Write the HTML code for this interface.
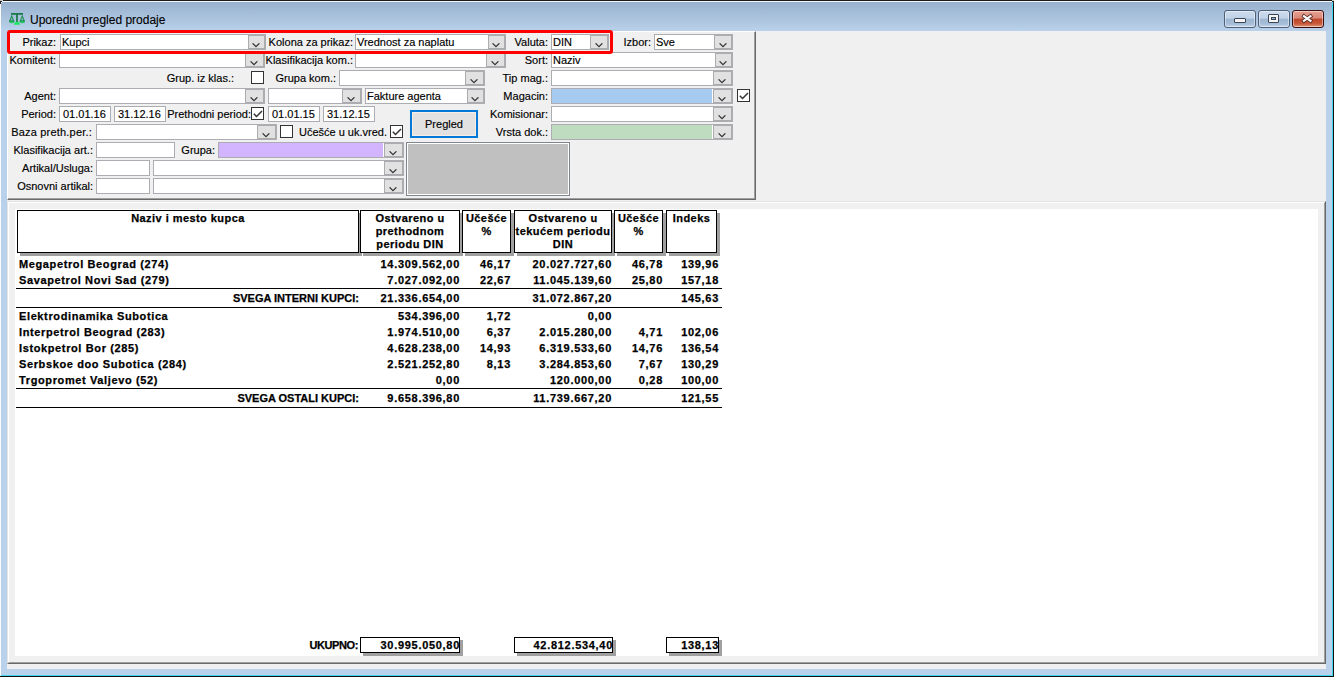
<!DOCTYPE html><html><head><meta charset="utf-8"><style>
html,body{margin:0;padding:0;width:1335px;height:677px;overflow:hidden;background:#fff}
body div{position:absolute;box-sizing:border-box}
.t{font:11px/13px "Liberation Sans",sans-serif;color:#000;white-space:nowrap;-webkit-text-stroke:0.15px #000}
.b{font:bold 11px/13px "Liberation Sans",sans-serif;color:#000;white-space:nowrap;-webkit-text-stroke:0.25px #000}
.cb{border:1px solid #abadb3}
.cbtn{position:absolute;right:0;top:0;bottom:0;border:1px solid #acacac;background:#e1e1e1}
.hd{background:#fff;border:1px solid #000;box-shadow:3px 3px 0 #a0a0a0}
</style></head><body>
<div style="left:0px;top:0px;width:1334px;height:677px;background:#b9d1ea"></div>
<div style="left:0px;top:0px;width:1334px;height:1px;background:#1b1b1b"></div>
<div style="left:0px;top:1px;width:1333px;height:1px;background:#f4f8fc"></div>
<div style="left:0px;top:2px;width:1332px;height:29px;background:linear-gradient(#98b1ce,#b9d1ea)"></div>
<div style="left:1333px;top:0px;width:1px;height:677px;background:#111"></div>
<div style="left:1332px;top:2px;width:1px;height:674px;background:#40d8f0"></div>
<div style="left:0px;top:676px;width:1334px;height:1px;background:#111"></div>
<div style="left:1px;top:675px;width:1332px;height:1px;background:#40d8f0"></div>
<div style="left:0px;top:0px;width:3px;height:1px;background:#cfcfcf"></div>
<div style="left:0px;top:1px;width:2px;height:1px;background:#1e1e1e"></div>
<div style="left:0px;top:2px;width:1px;height:2px;background:#2a2a2a"></div>
<div style="left:0px;top:4px;width:1px;height:672px;background:#fbfbfb"></div>
<div style="left:1px;top:2px;width:1px;height:1px;background:#f0f4f8"></div>
<div style="left:2px;top:1px;width:1px;height:1px;background:#f0f4f8"></div>
<div style="left:1332px;top:0px;width:3px;height:1px;background:#cfcfcf"></div>
<div style="left:1332px;top:1px;width:2px;height:1px;background:#1e1e1e"></div>
<div style="left:1333px;top:2px;width:1px;height:2px;background:#2a2a2a"></div>
<div style="left:1334px;top:0px;width:1px;height:677px;background:#ffffff"></div>
<svg style="position:absolute;left:0;top:0" width="30" height="30" viewBox="0 0 30 30">
<rect x="11" y="13" width="12" height="1.8" fill="#1d7a4c"/>
<rect x="16.1" y="13" width="1.8" height="9.5" fill="#1d7a4c"/>
<path d="M11.7,14.5 L9,21.3 Q9.3,23.3 11.7,23.3 Q14.1,23.3 14.4,21.3 Z" fill="#1f8f55"/>
<path d="M11.7,17.2 L10.6,20.2 L12.8,20.2 Z" fill="#8fb7c4"/>
<path d="M22.3,14.5 L19.6,21.3 Q19.9,23.3 22.3,23.3 Q24.7,23.3 25,21.3 Z" fill="#1f8f55"/>
<path d="M22.3,17.2 L21.2,20.2 L23.4,20.2 Z" fill="#8fb7c4"/>
<path d="M9.4,21.6 Q9.8,23.2 11.7,23.2 Q13.6,23.2 14,21.6 Z" fill="#25d468"/>
<path d="M20,21.6 Q20.4,23.2 22.3,23.2 Q24.2,23.2 24.6,21.6 Z" fill="#25d468"/>
<path d="M13.8,24.8 Q14.2,21.8 17,21.8 Q19.8,21.8 20.2,24.8 Z" fill="#1fe866"/>
</svg>
<div style="left:30px;top:14px;font:12px/13px 'Liberation Sans',sans-serif;color:#000;white-space:nowrap;-webkit-text-stroke:0.1px #000">Uporedni pregled prodaje</div>
<div style="left:1224px;top:10px;width:32px;height:18px;background:linear-gradient(#cddbec 0%,#c2d3e8 45%,#9fb6d2 50%,#a6bdd8 80%,#c5d6ea 100%);border:1px solid #4e5f78;border-radius:3px;box-shadow:inset 0 0 0 1px rgba(255,255,255,0.45)"></div>
<div style="left:1258px;top:10px;width:32px;height:18px;background:linear-gradient(#cddbec 0%,#c2d3e8 45%,#9fb6d2 50%,#a6bdd8 80%,#c5d6ea 100%);border:1px solid #4e5f78;border-radius:3px;box-shadow:inset 0 0 0 1px rgba(255,255,255,0.45)"></div>
<div style="left:1292px;top:10px;width:32px;height:18px;background:linear-gradient(#e8a090 0%,#d98878 45%,#c0452a 50%,#c85a3a 80%,#e09a80 100%);border:1px solid #3c0e0e;border-radius:3px;box-shadow:inset 0 0 0 1px rgba(255,255,255,0.45)"></div>
<div style="left:1234px;top:18px;width:12px;height:5px;background:#f4f4f4;border:1px solid #3a4658;border-radius:1px"></div>
<div style="left:1268px;top:14px;width:11px;height:9px;background:#f4f4f4;border:1px solid #3a4658;border-radius:1px"><div style="left:2px;top:2px;width:5px;height:3px;background:#9ab0c8;border:1px solid #3a4658"></div></div>
<svg style="position:absolute;left:1300px;top:13px" width="16" height="11" viewBox="0 0 16 11">
<path d="M4,3.2 L10.5,7.8 M10.5,3.2 L4,7.8" stroke="#5a2a24" stroke-width="3.8" stroke-linecap="square"/>
<path d="M4,3.2 L10.5,7.8 M10.5,3.2 L4,7.8" stroke="#f8f8f8" stroke-width="2.2" stroke-linecap="square"/>
</svg>
<div style="left:7px;top:31px;width:1319px;height:638px;background:#f0f0f0"></div>
<div style="left:7px;top:31px;width:749px;height:169px;border-top:1px solid #fff;border-left:1px solid #fff;border-right:1px solid #696969;border-bottom:1px solid #696969"><div style="left:0;top:0;right:0;bottom:0;border-right:1px solid #a0a0a0;border-bottom:1px solid #a0a0a0"></div></div>
<div style="left:7px;top:201px;width:1319px;height:463px;border-top:1px solid #e3e3e3;border-left:1px solid #e3e3e3;border-right:1px solid #696969;border-bottom:1px solid #696969"><div style="left:0;top:0;right:0;bottom:0;border-top:1px solid #fff;border-left:1px solid #fff;border-right:1px solid #a0a0a0;border-bottom:1px solid #a0a0a0"></div></div>
<div style="left:15px;top:209px;width:1303px;height:447px;background:#fff"></div>
<div class="t" style="left:-244px;top:36px;width:300px;text-align:right;">Prikaz:</div>
<div style="left:60px;top:34px;width:206px;height:16px;background:#fff"><div class="cb" style="position:absolute;left:0;top:0;right:0;bottom:0"><div class="cbtn" style="width:17px"><svg width="9" height="5" style="position:absolute;left:3px;top:7px"><polyline points="0.6,0.3 4,3.6 7.4,0.3" fill="none" stroke="#333" stroke-width="1.2"/></svg></div><div class="t" style="left:1px;top:1px">Kupci</div></div></div>
<div class="t" style="left:53px;top:36px;width:300px;text-align:right;">Kolona za prikaz:</div>
<div style="left:355px;top:34px;width:151px;height:16px;background:#fff"><div class="cb" style="position:absolute;left:0;top:0;right:0;bottom:0"><div class="cbtn" style="width:17px"><svg width="9" height="5" style="position:absolute;left:3px;top:7px"><polyline points="0.6,0.3 4,3.6 7.4,0.3" fill="none" stroke="#333" stroke-width="1.2"/></svg></div><div class="t" style="left:1px;top:1px">Vrednost za naplatu</div></div></div>
<div class="t" style="left:248px;top:36px;width:300px;text-align:right;">Valuta:</div>
<div style="left:551px;top:34px;width:58px;height:16px;background:#fff"><div class="cb" style="position:absolute;left:0;top:0;right:0;bottom:0"><div class="cbtn" style="width:18px"><svg width="9" height="5" style="position:absolute;left:4px;top:7px"><polyline points="0.6,0.3 4,3.6 7.4,0.3" fill="none" stroke="#333" stroke-width="1.2"/></svg></div><div class="t" style="left:1px;top:1px">DIN</div></div></div>
<div class="t" style="left:351px;top:36px;width:300px;text-align:right;">Izbor:</div>
<div style="left:654px;top:34px;width:79px;height:16px;background:#fff"><div class="cb" style="position:absolute;left:0;top:0;right:0;bottom:0"><div class="cbtn" style="width:18px"><svg width="9" height="5" style="position:absolute;left:4px;top:7px"><polyline points="0.6,0.3 4,3.6 7.4,0.3" fill="none" stroke="#333" stroke-width="1.2"/></svg></div><div class="t" style="left:1px;top:1px">Sve</div></div></div>
<div class="t" style="left:-244px;top:54px;width:300px;text-align:right;">Komitent:</div>
<div style="left:59px;top:52px;width:206px;height:16px;background:#fff"><div class="cb" style="position:absolute;left:0;top:0;right:0;bottom:0"><div class="cbtn" style="width:19px"><svg width="9" height="5" style="position:absolute;left:4px;top:7px"><polyline points="0.6,0.3 4,3.6 7.4,0.3" fill="none" stroke="#333" stroke-width="1.2"/></svg></div></div></div>
<div class="t" style="left:53px;top:54px;width:300px;text-align:right;">Klasifikacija kom.:</div>
<div style="left:355px;top:52px;width:151px;height:16px;background:#fff"><div class="cb" style="position:absolute;left:0;top:0;right:0;bottom:0"><div class="cbtn" style="width:19px"><svg width="9" height="5" style="position:absolute;left:4px;top:7px"><polyline points="0.6,0.3 4,3.6 7.4,0.3" fill="none" stroke="#333" stroke-width="1.2"/></svg></div></div></div>
<div class="t" style="left:248px;top:54px;width:300px;text-align:right;">Sort:</div>
<div style="left:551px;top:52px;width:182px;height:16px;background:#fff"><div class="cb" style="position:absolute;left:0;top:0;right:0;bottom:0"><div class="cbtn" style="width:17px"><svg width="9" height="5" style="position:absolute;left:3px;top:7px"><polyline points="0.6,0.3 4,3.6 7.4,0.3" fill="none" stroke="#333" stroke-width="1.2"/></svg></div><div class="t" style="left:1px;top:1px">Naziv</div></div></div>
<div class="t" style="left:-66px;top:72px;width:300px;text-align:right;">Grup. iz klas.:</div>
<div style="left:251px;top:71px;width:13px;height:13px;border:1px solid #333;box-sizing:border-box;background:#fff"></div>
<div class="t" style="left:36px;top:72px;width:300px;text-align:right;">Grupa kom.:</div>
<div style="left:339px;top:70px;width:146px;height:16px;background:#fff"><div class="cb" style="position:absolute;left:0;top:0;right:0;bottom:0"><div class="cbtn" style="width:19px"><svg width="9" height="5" style="position:absolute;left:4px;top:7px"><polyline points="0.6,0.3 4,3.6 7.4,0.3" fill="none" stroke="#333" stroke-width="1.2"/></svg></div></div></div>
<div class="t" style="left:248px;top:72px;width:300px;text-align:right;">Tip mag.:</div>
<div style="left:551px;top:70px;width:182px;height:16px;background:#fff"><div class="cb" style="position:absolute;left:0;top:0;right:0;bottom:0"><div class="cbtn" style="width:19px"><svg width="9" height="5" style="position:absolute;left:4px;top:7px"><polyline points="0.6,0.3 4,3.6 7.4,0.3" fill="none" stroke="#333" stroke-width="1.2"/></svg></div></div></div>
<div class="t" style="left:-244px;top:90px;width:300px;text-align:right;">Agent:</div>
<div style="left:59px;top:88px;width:206px;height:16px;background:#fff"><div class="cb" style="position:absolute;left:0;top:0;right:0;bottom:0"><div class="cbtn" style="width:19px"><svg width="9" height="5" style="position:absolute;left:4px;top:7px"><polyline points="0.6,0.3 4,3.6 7.4,0.3" fill="none" stroke="#333" stroke-width="1.2"/></svg></div></div></div>
<div style="left:268px;top:88px;width:94px;height:16px;background:#fff"><div class="cb" style="position:absolute;left:0;top:0;right:0;bottom:0"><div class="cbtn" style="width:19px"><svg width="9" height="5" style="position:absolute;left:4px;top:7px"><polyline points="0.6,0.3 4,3.6 7.4,0.3" fill="none" stroke="#333" stroke-width="1.2"/></svg></div></div></div>
<div style="left:365px;top:88px;width:120px;height:16px;background:#fff"><div class="cb" style="position:absolute;left:0;top:0;right:0;bottom:0"><div class="cbtn" style="width:17px"><svg width="9" height="5" style="position:absolute;left:3px;top:7px"><polyline points="0.6,0.3 4,3.6 7.4,0.3" fill="none" stroke="#333" stroke-width="1.2"/></svg></div><div class="t" style="left:1px;top:1px">Fakture agenta</div></div></div>
<div class="t" style="left:248px;top:90px;width:300px;text-align:right;">Magacin:</div>
<div style="left:551px;top:88px;width:182px;height:16px;background:#a6caf0"><div class="cb" style="position:absolute;left:0;top:0;right:0;bottom:0"><div class="cbtn" style="width:19px"><svg width="9" height="5" style="position:absolute;left:4px;top:7px"><polyline points="0.6,0.3 4,3.6 7.4,0.3" fill="none" stroke="#333" stroke-width="1.2"/></svg></div><div style="right:19px;top:0;bottom:0;width:1px;background:#fff"></div></div></div>
<div style="left:737px;top:89px;width:13px;height:13px;border:1px solid #333;box-sizing:border-box;background:#fff"><svg width="13" height="13" style="position:absolute;left:0;top:0"><polyline points="1.8,5.8 4.5,8.5 10,3" fill="none" stroke="#333" stroke-width="1.5"/></svg></div>
<div class="t" style="left:-244px;top:108px;width:300px;text-align:right;">Period:</div>
<div style="left:59px;top:106px;width:52px;height:16px;border:1px solid #abadb3;box-sizing:border-box;background:#fff"><div class="t" style="left:3px;top:1px">01.01.16</div></div>
<div style="left:114px;top:106px;width:52px;height:16px;border:1px solid #abadb3;box-sizing:border-box;background:#fff"><div class="t" style="left:3px;top:1px">31.12.16</div></div>
<div class="t" style="left:-49px;top:108px;width:300px;text-align:right;">Prethodni period:</div>
<div style="left:251px;top:107px;width:13px;height:13px;border:1px solid #333;box-sizing:border-box;background:#fff"><svg width="13" height="13" style="position:absolute;left:0;top:0"><polyline points="1.8,5.8 4.5,8.5 10,3" fill="none" stroke="#333" stroke-width="1.5"/></svg></div>
<div style="left:268px;top:106px;width:52px;height:16px;border:1px solid #abadb3;box-sizing:border-box;background:#fff"><div class="t" style="left:3px;top:1px">01.01.15</div></div>
<div style="left:323px;top:106px;width:52px;height:16px;border:1px solid #abadb3;box-sizing:border-box;background:#fff"><div class="t" style="left:3px;top:1px">31.12.15</div></div>
<div style="left:410px;top:110px;width:68px;height:28px;border:2px solid #0078d7;background:#e1e1e1"><div style="left:0;top:0;right:0;bottom:0;border:1px solid #f6efe6"></div><div class="t" style="left:0;top:6px;width:64px;text-align:center">Pregled</div></div>
<div class="t" style="left:248px;top:108px;width:300px;text-align:right;">Komisionar:</div>
<div style="left:551px;top:106px;width:182px;height:16px;background:#fff"><div class="cb" style="position:absolute;left:0;top:0;right:0;bottom:0"><div class="cbtn" style="width:19px"><svg width="9" height="5" style="position:absolute;left:4px;top:7px"><polyline points="0.6,0.3 4,3.6 7.4,0.3" fill="none" stroke="#333" stroke-width="1.2"/></svg></div></div></div>
<div class="t" style="left:-208px;top:126px;width:300px;text-align:right;letter-spacing:0.2px">Baza preth.per.:</div>
<div style="left:96px;top:124px;width:181px;height:16px;background:#fff"><div class="cb" style="position:absolute;left:0;top:0;right:0;bottom:0"><div class="cbtn" style="width:19px"><svg width="9" height="5" style="position:absolute;left:4px;top:7px"><polyline points="0.6,0.3 4,3.6 7.4,0.3" fill="none" stroke="#333" stroke-width="1.2"/></svg></div></div></div>
<div style="left:280px;top:125px;width:13px;height:13px;border:1px solid #333;box-sizing:border-box;background:#fff"></div>
<div class="t" style="left:87px;top:126px;width:300px;text-align:right;">U&#269;e&#353;&#263;e u uk.vred.</div>
<div style="left:390px;top:125px;width:13px;height:13px;border:1px solid #333;box-sizing:border-box;background:#fff"><svg width="13" height="13" style="position:absolute;left:0;top:0"><polyline points="1.8,5.8 4.5,8.5 10,3" fill="none" stroke="#333" stroke-width="1.5"/></svg></div>
<div class="t" style="left:248px;top:126px;width:300px;text-align:right;">Vrsta dok.:</div>
<div style="left:551px;top:124px;width:182px;height:16px;background:#c0dcc0"><div class="cb" style="position:absolute;left:0;top:0;right:0;bottom:0"><div class="cbtn" style="width:19px"><svg width="9" height="5" style="position:absolute;left:4px;top:7px"><polyline points="0.6,0.3 4,3.6 7.4,0.3" fill="none" stroke="#333" stroke-width="1.2"/></svg></div><div style="right:19px;top:0;bottom:0;width:1px;background:#fff"></div></div></div>
<div class="t" style="left:-207px;top:144px;width:300px;text-align:right;">Klasifikacija art.:</div>
<div style="left:96px;top:142px;width:79px;height:16px;border:1px solid #abadb3;box-sizing:border-box;background:#fff"></div>
<div class="t" style="left:-85px;top:144px;width:300px;text-align:right;">Grupa:</div>
<div style="left:218px;top:142px;width:186px;height:16px;background:#d3b5ff"><div class="cb" style="position:absolute;left:0;top:0;right:0;bottom:0"><div class="cbtn" style="width:19px"><svg width="9" height="5" style="position:absolute;left:4px;top:7px"><polyline points="0.6,0.3 4,3.6 7.4,0.3" fill="none" stroke="#333" stroke-width="1.2"/></svg></div><div style="right:19px;top:0;bottom:0;width:1px;background:#fff"></div></div></div>
<div style="left:406px;top:142px;width:164px;height:54px;border:1px solid #80868f;background:#c0c0c0"><div style="left:0;top:0;right:0;bottom:0;border:1px solid #fff"></div></div>
<div class="t" style="left:-207px;top:162px;width:300px;text-align:right;">Artikal/Usluga:</div>
<div style="left:96px;top:160px;width:54px;height:16px;border:1px solid #abadb3;box-sizing:border-box;background:#fff"></div>
<div style="left:153px;top:160px;width:251px;height:16px;background:#fff"><div class="cb" style="position:absolute;left:0;top:0;right:0;bottom:0"><div class="cbtn" style="width:19px"><svg width="9" height="5" style="position:absolute;left:4px;top:7px"><polyline points="0.6,0.3 4,3.6 7.4,0.3" fill="none" stroke="#333" stroke-width="1.2"/></svg></div></div></div>
<div class="t" style="left:-207px;top:180px;width:300px;text-align:right;">Osnovni artikal:</div>
<div style="left:96px;top:178px;width:54px;height:16px;border:1px solid #abadb3;box-sizing:border-box;background:#fff"></div>
<div style="left:153px;top:178px;width:251px;height:16px;background:#fff"><div class="cb" style="position:absolute;left:0;top:0;right:0;bottom:0"><div class="cbtn" style="width:19px"><svg width="9" height="5" style="position:absolute;left:4px;top:7px"><polyline points="0.6,0.3 4,3.6 7.4,0.3" fill="none" stroke="#333" stroke-width="1.2"/></svg></div></div></div>
<div style="left:7px;top:30px;width:606px;height:24px;border:3px solid #ff0000;border-radius:3px"></div>
<div style="left:17px;top:210px;width:342px;height:43px;background:#fff;border:1px solid #000;box-shadow:3px 3px 0 #a0a0a0"><div class="b" style="left:-30px;right:-30px;top:1px;text-align:center;letter-spacing:0.45px">Naziv i mesto kupca</div></div>
<div style="left:360px;top:210px;width:100px;height:43px;background:#fff;border:1px solid #000;box-shadow:3px 3px 0 #a0a0a0"><div class="b" style="left:-30px;right:-30px;top:1px;text-align:center;letter-spacing:0.45px">Ostvareno u</div><div class="b" style="left:-30px;right:-30px;top:14px;text-align:center;letter-spacing:0.45px">prethodnom</div><div class="b" style="left:-30px;right:-30px;top:27px;text-align:center;letter-spacing:0.45px">periodu DIN</div></div>
<div style="left:462px;top:210px;width:49px;height:43px;background:#fff;border:1px solid #000;box-shadow:3px 3px 0 #a0a0a0"><div class="b" style="left:-30px;right:-30px;top:1px;text-align:center;letter-spacing:0.45px">U&#269;e&#353;&#263;e</div><div class="b" style="left:-30px;right:-30px;top:14px;text-align:center;letter-spacing:0.45px">%</div></div>
<div style="left:514px;top:210px;width:98px;height:43px;background:#fff;border:1px solid #000;box-shadow:3px 3px 0 #a0a0a0"><div class="b" style="left:-30px;right:-30px;top:1px;text-align:center;letter-spacing:0.45px">Ostvareno u</div><div class="b" style="left:-30px;right:-30px;top:14px;text-align:center;letter-spacing:0.45px">teku&#263;em periodu</div><div class="b" style="left:-30px;right:-30px;top:27px;text-align:center;letter-spacing:0.45px">DIN</div></div>
<div style="left:614px;top:210px;width:49px;height:43px;background:#fff;border:1px solid #000;box-shadow:3px 3px 0 #a0a0a0"><div class="b" style="left:-30px;right:-30px;top:1px;text-align:center;letter-spacing:0.45px">U&#269;e&#353;&#263;e</div><div class="b" style="left:-30px;right:-30px;top:14px;text-align:center;letter-spacing:0.45px">%</div></div>
<div style="left:666px;top:210px;width:51px;height:43px;background:#fff;border:1px solid #000;box-shadow:3px 3px 0 #a0a0a0"><div class="b" style="left:-30px;right:-30px;top:1px;text-align:center;letter-spacing:0.45px">Indeks</div></div>
<div class="b" style="left:19px;top:258px;letter-spacing:0.62px">Megapetrol Beograd (274)</div>
<div class="b" style="left:160px;top:258px;width:300px;text-align:right;letter-spacing:0.7px">14.309.562,00</div>
<div class="b" style="left:211px;top:258px;width:300px;text-align:right;letter-spacing:0.7px">46,17</div>
<div class="b" style="left:312px;top:258px;width:300px;text-align:right;letter-spacing:0.7px">20.027.727,60</div>
<div class="b" style="left:363px;top:258px;width:300px;text-align:right;letter-spacing:0.7px">46,78</div>
<div class="b" style="left:419px;top:258px;width:300px;text-align:right;letter-spacing:0.7px">139,96</div>
<div class="b" style="left:19px;top:274px;letter-spacing:0.62px">Savapetrol Novi Sad (279)</div>
<div class="b" style="left:160px;top:274px;width:300px;text-align:right;letter-spacing:0.7px">7.027.092,00</div>
<div class="b" style="left:211px;top:274px;width:300px;text-align:right;letter-spacing:0.7px">22,67</div>
<div class="b" style="left:312px;top:274px;width:300px;text-align:right;letter-spacing:0.7px">11.045.139,60</div>
<div class="b" style="left:363px;top:274px;width:300px;text-align:right;letter-spacing:0.7px">25,80</div>
<div class="b" style="left:419px;top:274px;width:300px;text-align:right;letter-spacing:0.7px">157,18</div>
<div class="b" style="left:59px;top:292px;width:300px;text-align:right;">SVEGA INTERNI KUPCI:</div>
<div class="b" style="left:160px;top:292px;width:300px;text-align:right;letter-spacing:0.7px">21.336.654,00</div>
<div class="b" style="left:312px;top:292px;width:300px;text-align:right;letter-spacing:0.7px">31.072.867,20</div>
<div class="b" style="left:419px;top:292px;width:300px;text-align:right;letter-spacing:0.7px">145,63</div>
<div class="b" style="left:19px;top:310px;letter-spacing:0.62px">Elektrodinamika Subotica</div>
<div class="b" style="left:160px;top:310px;width:300px;text-align:right;letter-spacing:0.7px">534.396,00</div>
<div class="b" style="left:211px;top:310px;width:300px;text-align:right;letter-spacing:0.7px">1,72</div>
<div class="b" style="left:312px;top:310px;width:300px;text-align:right;letter-spacing:0.7px">0,00</div>
<div class="b" style="left:19px;top:326px;letter-spacing:0.62px">Interpetrol Beograd (283)</div>
<div class="b" style="left:160px;top:326px;width:300px;text-align:right;letter-spacing:0.7px">1.974.510,00</div>
<div class="b" style="left:211px;top:326px;width:300px;text-align:right;letter-spacing:0.7px">6,37</div>
<div class="b" style="left:312px;top:326px;width:300px;text-align:right;letter-spacing:0.7px">2.015.280,00</div>
<div class="b" style="left:363px;top:326px;width:300px;text-align:right;letter-spacing:0.7px">4,71</div>
<div class="b" style="left:419px;top:326px;width:300px;text-align:right;letter-spacing:0.7px">102,06</div>
<div class="b" style="left:19px;top:342px;letter-spacing:0.62px">Istokpetrol Bor (285)</div>
<div class="b" style="left:160px;top:342px;width:300px;text-align:right;letter-spacing:0.7px">4.628.238,00</div>
<div class="b" style="left:211px;top:342px;width:300px;text-align:right;letter-spacing:0.7px">14,93</div>
<div class="b" style="left:312px;top:342px;width:300px;text-align:right;letter-spacing:0.7px">6.319.533,60</div>
<div class="b" style="left:363px;top:342px;width:300px;text-align:right;letter-spacing:0.7px">14,76</div>
<div class="b" style="left:419px;top:342px;width:300px;text-align:right;letter-spacing:0.7px">136,54</div>
<div class="b" style="left:19px;top:358px;letter-spacing:0.62px">Serbskoe doo Subotica (284)</div>
<div class="b" style="left:160px;top:358px;width:300px;text-align:right;letter-spacing:0.7px">2.521.252,80</div>
<div class="b" style="left:211px;top:358px;width:300px;text-align:right;letter-spacing:0.7px">8,13</div>
<div class="b" style="left:312px;top:358px;width:300px;text-align:right;letter-spacing:0.7px">3.284.853,60</div>
<div class="b" style="left:363px;top:358px;width:300px;text-align:right;letter-spacing:0.7px">7,67</div>
<div class="b" style="left:419px;top:358px;width:300px;text-align:right;letter-spacing:0.7px">130,29</div>
<div class="b" style="left:19px;top:374px;letter-spacing:0.62px">Trgopromet Valjevo (52)</div>
<div class="b" style="left:160px;top:374px;width:300px;text-align:right;letter-spacing:0.7px">0,00</div>
<div class="b" style="left:312px;top:374px;width:300px;text-align:right;letter-spacing:0.7px">120.000,00</div>
<div class="b" style="left:363px;top:374px;width:300px;text-align:right;letter-spacing:0.7px">0,28</div>
<div class="b" style="left:419px;top:374px;width:300px;text-align:right;letter-spacing:0.7px">100,00</div>
<div class="b" style="left:59px;top:392px;width:300px;text-align:right;">SVEGA OSTALI KUPCI:</div>
<div class="b" style="left:160px;top:392px;width:300px;text-align:right;letter-spacing:0.7px">9.658.396,80</div>
<div class="b" style="left:312px;top:392px;width:300px;text-align:right;letter-spacing:0.7px">11.739.667,20</div>
<div class="b" style="left:419px;top:392px;width:300px;text-align:right;letter-spacing:0.7px">121,55</div>
<div style="left:16px;top:288px;width:706px;height:1px;background:#000"></div>
<div style="left:16px;top:307px;width:706px;height:1px;background:#000"></div>
<div style="left:16px;top:388px;width:706px;height:1px;background:#000"></div>
<div style="left:16px;top:407px;width:706px;height:1px;background:#000"></div>
<div class="b" style="left:58px;top:639px;width:300px;text-align:right;letter-spacing:-0.4px">UKUPNO:</div>
<div style="left:360px;top:637px;width:100px;height:16px;background:#fff;border:1px solid #000;box-shadow:3px 3px 0 #a0a0a0"></div>
<div class="b" style="left:160px;top:639px;width:300px;text-align:right;letter-spacing:0.7px">30.995.050,80</div>
<div style="left:514px;top:637px;width:99px;height:16px;background:#fff;border:1px solid #000;box-shadow:3px 3px 0 #a0a0a0"></div>
<div class="b" style="left:313px;top:639px;width:300px;text-align:right;letter-spacing:0.7px">42.812.534,40</div>
<div style="left:666px;top:637px;width:53px;height:16px;background:#fff;border:1px solid #000;box-shadow:3px 3px 0 #a0a0a0"></div>
<div class="b" style="left:419px;top:639px;width:300px;text-align:right;letter-spacing:0.7px">138,13</div>
</body></html>
